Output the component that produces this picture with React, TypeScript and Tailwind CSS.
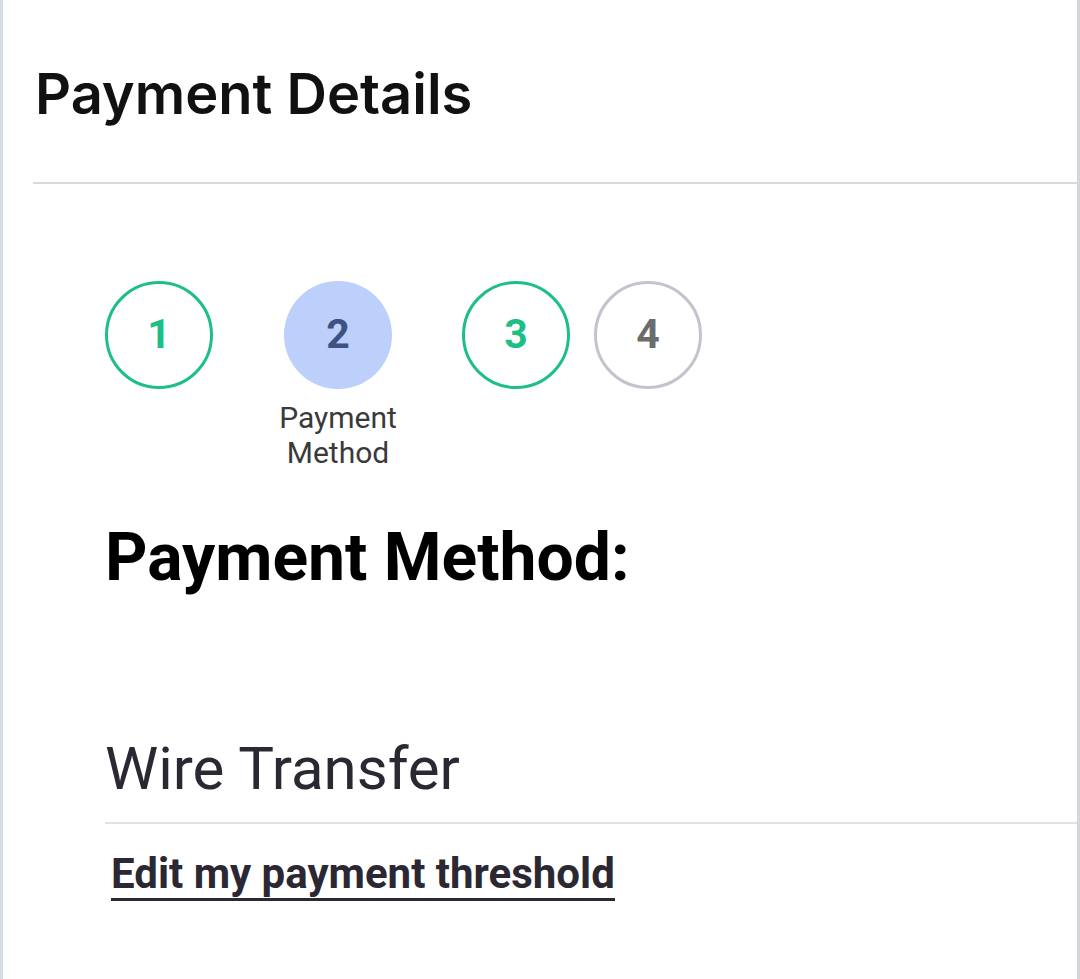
const steps = [
	{ n: "1", kind: "done" },
	{ n: "2", kind: "active", label: ["Payment", "Method"] },
	{ n: "3", kind: "done" },
	{ n: "4", kind: "todo" },
];

const circleClasses: { [key: string]: string } = {
	done: "border-[3px] border-[#1dbf86] text-[#1dbf86]",
	active: "bg-[#bcd0fb] text-[#3d5182]",
	todo: "border-[3px] border-[#c2c3cf] text-[#6a6c6e]",
};

const stepMargins = ["", "ml-[71px]", "ml-[70px]", "ml-[24px]"];

function Stepper() {
	return (
		<div className="flex items-start">
			{steps.map((s, i) => (
				<div key={s.n} className={`relative flex flex-col items-center ${stepMargins[i]}`}>
					<div
						className={`w-[108px] h-[108px] rounded-full flex items-center justify-center text-[41px] font-bold ${circleClasses[s.kind]}`}
					>
						{s.n}
					</div>
					{s.label && (
						<div className="absolute top-[119px] text-center text-[30px] leading-[35px] text-[#3a3a3a] whitespace-nowrap">
							{s.label[0]}
							<br />
							{s.label[1]}
						</div>
					)}
				</div>
			))}
		</div>
	);
}

export default function App() {
	return (
		<div
			className="w-[1080px] h-[979px] flex bg-white"
			style={{ fontFamily: "Roboto, 'Liberation Sans', sans-serif" }}
		>
			<div className="w-[3px] bg-[#d5dce3]" />
			<div className="flex-1 flex flex-col">
				<h1
					className="pl-[32px] pt-[60px] text-[56px] leading-[69px] font-semibold text-[#111111]"
					style={{ fontFamily: "Inter, sans-serif" }}
				>
					Payment Details
				</h1>
				<div className="ml-[30px] mt-[53px] h-[2px] bg-[#d9d9d9]" />
				<div className="pl-[102px] pt-[97px]">
					<Stepper />
					<h2 className="mt-[129px] text-[66px] leading-[79px] font-bold text-black">
						Payment Method:
					</h2>
					<div className="mt-[137px] text-[60px] leading-[70px] text-[#2b2733]">
						Wire Transfer
					</div>
					<div className="mt-[18px] h-[2px] bg-[#e2e2e2]" />
				</div>
				<div className="flex-1 pl-[108px] pt-[25px]">
					<a
						href="#"
						className="inline-block text-[42px] leading-[49px] font-bold text-[#2b2733] border-b-[3px] border-[#2b2733]"
					>
						Edit my payment threshold
					</a>
				</div>
			</div>
			<div className="w-[3px] bg-[#d0d8de]" />
		</div>
	);
}
